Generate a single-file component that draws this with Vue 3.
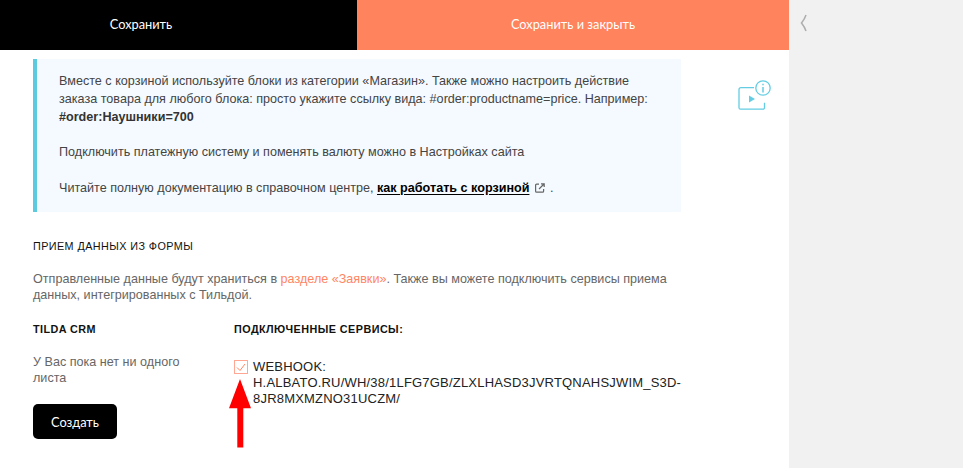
<script setup>
const serviceUrl = 'H.ALBATO.RU/WH/38/1LFG7GB/ZLXLHASD3JVRTQNAHSJWIM_S3D-8JR8MXMZNO31UCZM/'
</script>

<template>
  <div class="page">
    <main class="main">
      <div class="topbar">
        <button class="bar-btn save">Сохранить</button>
        <button class="bar-btn close">Сохранить и закрыть</button>
      </div>
      <div class="content">
        <div class="info-row">
          <div class="info">
            <p>Вместе с корзиной используйте блоки из категории «Магазин». Также можно настроить действие заказа товара для любого блока: просто укажите ссылку вида: #order:productname=price. Например: <b>#order:Наушники=700</b></p>
            <p>Подключить платежную систему и поменять валюту можно в Настройках сайта</p>
            <p>Читайте полную документацию в справочном центре, <a class="doc-link">как работать с корзиной</a>
              <svg class="ext" width="10" height="10" viewBox="0 0 10 10" fill="none" stroke="#666" stroke-width="1.2"><path d="M4 1.2H1.6a1 1 0 0 0-1 1v6a1 1 0 0 0 1 1h6a1 1 0 0 0 1-1V6"/><path d="M4 6 9 1M6 .8h3.2V4"/></svg> .</p>
          </div>
          <svg class="video" width="34" height="31" viewBox="0 0 34 31" fill="none" stroke="#64cde3" stroke-width="1.3">
            <path d="M16 7.7H3a2 2 0 0 0-2 2v18a1.5 1.5 0 0 0 1.5 1.5H25a1.5 1.5 0 0 0 1.500-1.500v-5"/>
            <circle cx="25" cy="8" r="7.2"/>
            <path d="M25 7v5.500" stroke-width="1.5"/>
            <path d="M25 3.700v1.500" stroke-width="1.5"/>
            <path d="M11 15.500l6 3.500-6 3.500z" fill="#64cde3" stroke="none"/>
          </svg>
        </div>

        <h3 class="section-title">ПРИЕМ ДАННЫХ ИЗ ФОРМЫ</h3>
        <p class="desc">Отправленные данные будут храниться в <a class="orange">разделе «Заявки»</a>. Также вы можете подключить сервисы приема данных, интегрированных с Тильдой.</p>

        <div class="columns">
          <div class="col-left">
            <h4 class="col-title">TILDA CRM</h4>
            <p class="empty">У Вас пока нет ни одного листа</p>
            <button class="create">Создать</button>
          </div>
          <div class="col-right">
            <h4 class="col-title">ПОДКЛЮЧЕННЫЕ СЕРВИСЫ:</h4>
            <div class="service">
              <span class="check">
                <svg width="10" height="9" viewBox="0 0 10 9" fill="none" stroke="#ff8562" stroke-width="1"><path d="M1 4.500 4 7.500 9 1"/></svg>
              </span>
              <span class="service-text">WEBHOOK: {{ serviceUrl }}</span>
              <svg class="arrow" width="22" height="69" viewBox="0 0 22 69"><path d="M11 0 22 29.300H14.300V68.500H8.300V29.300H0z" fill="#ff0000"/></svg>
            </div>
          </div>
        </div>
      </div>
    </main>
    <aside class="side">
      <svg class="chev" width="7" height="18" viewBox="0 0 7 18" fill="none" stroke="#adadad" stroke-width="1.5"><path d="M6 1C5 4 3.500 6.500 1.500 9 3.500 11.500 5 14 6 17"/></svg>
    </aside>
  </div>
</template>

<style scoped>
.page {
  display: flex;
  width: 963px;
  height: 468px;
  overflow: hidden;
  background: #fff;
  font-family: "Liberation Sans", Arial, sans-serif;
}
.main { width: 789px; flex: none; }
.side {
  flex: 1;
  background: #f1f1f1;
  padding: 14px 0 0 11px;
  box-sizing: border-box;
}
.chev { display: block; }
.topbar { display: flex; height: 50px; }
.bar-btn {
  border: 0;
  color: #fff;
  font-family: Lato, "Noto Sans", sans-serif;
  font-size: 12.8px;
}
.save { width: 357px; padding: 0 75px 2px 0; background: #000; }
.close { flex: 1; padding: 0 0 2px; background: #ff835c; }
.content { padding: 9px 0 0 33px; }
.info-row { display: flex; align-items: flex-start; }
.info {
  width: 648px;
  box-sizing: border-box;
  border-left: 4px solid #5ccbe0;
  background: #f4faff;
  padding: 14px 22px 15px;
  color: #444;
  font-size: 12.6px;
  line-height: 17.75px;
}
.info p { margin: 0 0 17.75px; }
.info p:last-child { margin: 0; }
.info b { color: #333; }
.doc-link {
  color: #000;
  font-weight: bold;
  text-decoration: underline;
  text-underline-offset: 2px;
}
.ext { margin: 0 1px -1px 6px; }
.video { margin: 21px 0 0 57px; }
.section-title {
  margin: 27px 0 0;
  color: #111;
  font-size: 10.8px;
  font-weight: normal;
  line-height: 14px;
  letter-spacing: .42px;
}
.desc {
  width: 648px;
  margin: 18px 0 0;
  color: #666;
  font-size: 12.6px;
  line-height: 16px;
}
.orange { color: #ff8562; }
.columns { display: flex; margin-top: 19px; }
.col-left { width: 201px; flex: none; }
.col-right { width: 448px; flex: none; }
.col-title {
  margin: 0;
  color: #111;
  font-size: 10.8px;
  font-weight: bold;
  line-height: 14px;
  letter-spacing: .45px;
}
.empty {
  width: 170px;
  margin: 18px 0 0;
  color: #666;
  font-size: 12.6px;
  line-height: 16px;
}
.create {
  display: block;
  width: 84px;
  height: 35px;
  margin-top: 18px;
  border: 0;
  border-radius: 5px;
  background: #000;
  color: #fff;
  font-family: Lato, "Noto Sans", sans-serif;
  font-size: 12.8px;
}
.service {
  position: relative;
  display: flex;
  gap: 5px;
  margin-top: 23px;
}
.check {
  display: flex;
  align-items: center;
  justify-content: center;
  flex: none;
  box-sizing: border-box;
  width: 14px;
  height: 14px;
  margin-top: 1px;
  border: 1px solid #ffa792;
}
.service-text {
  width: 429px;
  color: #222;
  font-size: 13px;
  line-height: 16px;
  letter-spacing: .2px;
  overflow-wrap: anywhere;
}
.arrow { position: absolute; left: -5px; top: 20px; }
</style>
